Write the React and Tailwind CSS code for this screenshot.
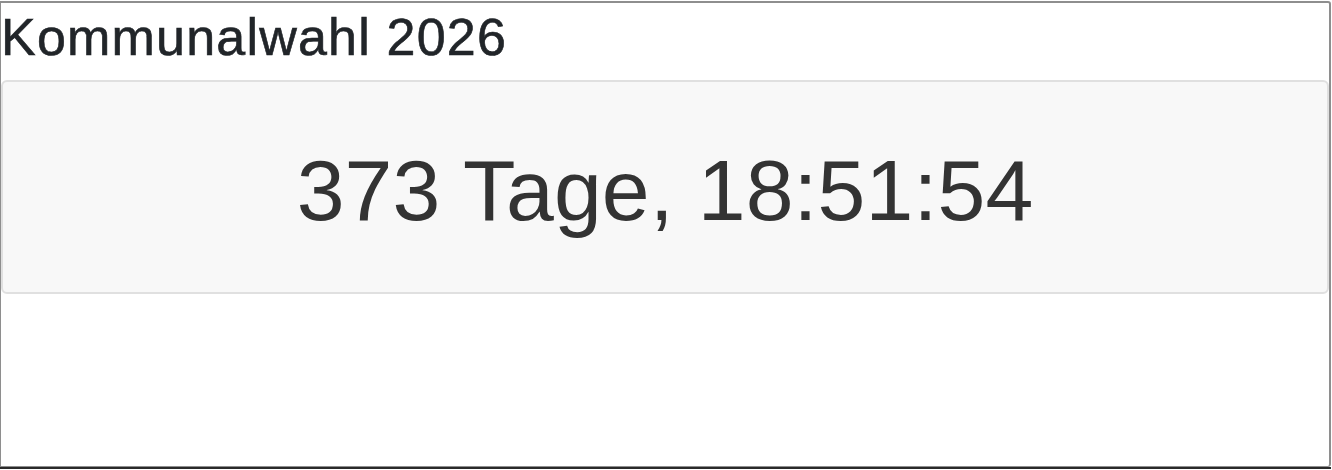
import React from 'react';

const App = () => {
  return (
    <div className="w-[1332px] h-[470px] bg-white" style={{ fontFamily: '"Liberation Sans", Arial, sans-serif' }}>
      <div className="w-[1331px] h-[469px] pt-[1px] border-b-2 border-[#2a2a2a]">
        <div className="h-full border-t-2 border-l border-r-2 border-b border-[#8e8e8e] rounded-tr-[3px] rounded-br-[3px]">
          <h2 className="text-[52px] leading-[78px] tracking-[1.2px] text-[#212529] font-normal m-0 -mt-[5px] [-webkit-text-stroke:0.6px_#212529]">
            Kommunalwahl 2026
          </h2>
          <div className="mt-[4px] h-[214px] bg-[#f8f8f8] border-2 border-[#e0e0e0] rounded-[6px] flex items-center justify-center">
            <span className="text-[86px] leading-none text-[#333333] tracking-[0.1px] mt-[6px]">
              373 Tage, 18:51:54
            </span>
          </div>
        </div>
      </div>
    </div>
  );
};

export default App;
